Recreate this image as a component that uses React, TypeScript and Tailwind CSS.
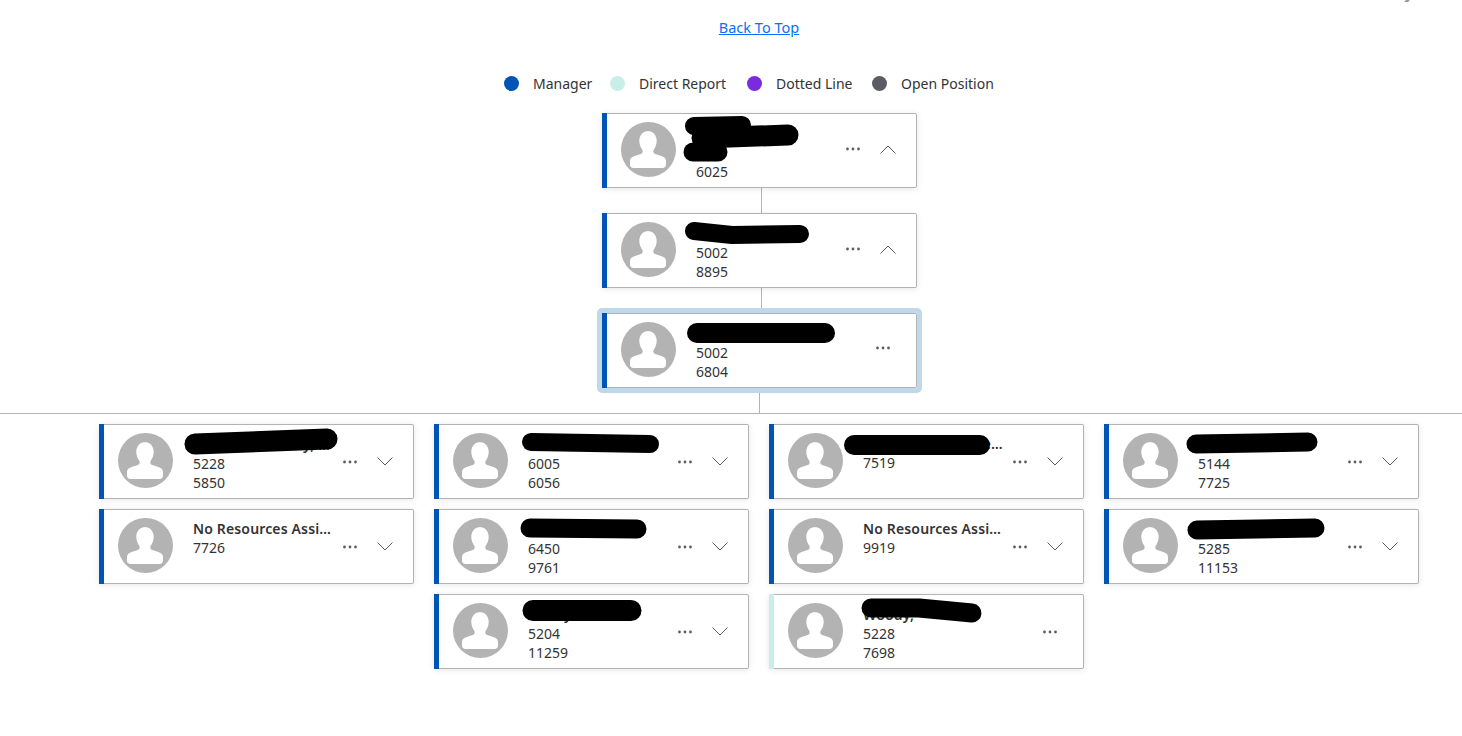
import { ReactNode } from "react";

const MANAGER = "bg-[#0054b4]";
const DIRECT = "bg-[#c9eeea]";

// person placeholder used on every card
function Avatar() {
  return (
    <svg width="55" height="55" viewBox="0 0 55 55" className="shrink-0">
      <circle cx="27.5" cy="27.5" r="27.5" fill="#b3b3b3" />
      <path
        d="M27.5 9c-5.400 0-9.200 4.200-9.200 9.800 0 3.700 1.300 6.500 2.800 8.700.9 1.300.9 3.400-.7 4.200-2.500 1.200-6.400 2-8.900 3.200-1.700.8-2.500 2.300-2.500 4.100v3.500c0 2 1.300 3.500 3.500 3.500h29c2.200 0 3.500-1.500 3.500-3.500v-3.500c0-1.800-.8-3.300-2.500-4.100-2.500-1.200-6.400-2-8.900-3.200-1.600-.8-1.600-2.900-.7-4.200 1.500-2.200 2.800-5 2.800-8.700 0-5.600-3.800-9.800-9.200-9.800z"
        fill="#fff"
      />
    </svg>
  );
}

function Dots() {
  return (
    <svg width="16" height="4" viewBox="0 0 16 4" className="shrink-0">
      <circle cx="2.500" cy="2" r="1.400" fill="#5c5c66" />
      <circle cx="8" cy="2" r="1.400" fill="#5c5c66" />
      <circle cx="13.500" cy="2" r="1.400" fill="#5c5c66" />
    </svg>
  );
}

function Chevron({ up }: { up?: boolean }) {
  return (
    <svg width="16" height="9" viewBox="0 0 16 9" className={`shrink-0 ${up ? "translate-y-px" : ""}`}>
      <path d={up ? "M.5 8.500 8 1l7.500 7.500" : "M.5.5 8 8 15.500.5"} fill="none" stroke="#5c5c66" strokeWidth="1" />
    </svg>
  );
}

interface CardProps {
  name?: string;
  second?: string;
  numbers: string[];
  accent?: string;
  chevron?: "up" | "down";
  selected?: boolean;
  upper?: boolean;
  blob?: ReactNode; // black marker stroke over the name
}

function Card({ name, second, numbers, accent = MANAGER, chevron, selected, upper, blob }: CardProps) {
  const single = numbers.length === 1 && !second;
  return (
    <div className="relative flex h-[75px] w-[315px] shrink-0 items-start rounded-[2px] border border-l-0 border-[#b3b3b3] bg-white shadow-[0_1px_6px_rgba(0,0,0,0.1)]">
      {selected && (
        <div className="pointer-events-none absolute -bottom-[6px] -left-[5px] -right-[6px] -top-[6px] rounded-[5px] border-[5px] border-[#c0d9ea]" />
      )}
      <div className={`h-[75px] -my-px w-[5px] shrink-0 ${accent}`} />
      <div className="ml-[14px] mt-2">
        <Avatar />
      </div>
      <div className={`ml-5 w-[140px] shrink-0 text-[14px] leading-[19px] text-[#333] ${single ? "pt-[9px]" : "pt-[10px]"}`}>
        {name && <div className="truncate font-semibold tracking-[0.15px]">{name}</div>}
        {second && <div className="truncate font-semibold">{second}</div>}
        {numbers.map((n) => (
          <div key={n}>{n}</div>
        ))}
      </div>
      {chevron ? (
        <div className={`ml-[9px] flex items-center gap-[19px] ${upper ? "mt-[30px]" : "mt-[32px]"}`}>
          <Dots />
          <Chevron up={chevron === "up"} />
        </div>
      ) : (
        <div className={`ml-[39px] flex items-center ${upper ? "mt-[32px]" : "mt-[35px]"}`}>
          <Dots />
        </div>
      )}
      {blob && (
        <svg width="315" height="75" viewBox="0 0 315 75" className="pointer-events-none absolute left-0 -top-px">
          <g fill="none" stroke="#000" strokeLinecap="round" strokeLinejoin="round">
            {blob}
          </g>
        </svg>
      )}
    </div>
  );
}

function VLine({ shifted }: { shifted?: boolean }) {
  return <div className={`h-[25px] w-px bg-[#b3b3b3] ${shifted ? "ml-[4px]" : ""}`} />;
}

function LegendItem({ color, label, width }: { color: string; label: string; width: string }) {
  return (
    <div className="mr-5 flex items-center gap-[14px]">
      <span className={`h-[15px] w-[15px] rounded-full ${color}`} />
      <span className={`whitespace-nowrap ${width}`}>{label}</span>
    </div>
  );
}

export default function App() {
  return (
    <div className="relative min-h-[736px] bg-white text-[14px] text-[#333] [font-family:'Noto_Sans',sans-serif]">
      <div className="absolute right-[53px] top-0 h-[2px] w-[4px] -skew-x-[40deg] bg-[#9a9a9a]" />

      <div className="flex flex-col items-center pl-[57px] pt-[17px]">
        <a href="#top" className="-ml-px text-[14.5px] leading-5 text-[#0d6efd] underline">
          Back To Top
        </a>
        <div className="mt-[36px] flex h-5 items-center">
          <LegendItem color={MANAGER} label="Manager" width="w-[57px]" />
          <LegendItem color={DIRECT} label="Direct Report" width="w-[88px]" />
          <LegendItem color="bg-[#7a2be0]" label="Dotted Line" width="w-[76px]" />
          <LegendItem color="bg-[#5c5c66]" label="Open Position" width="w-[94px]" />
        </div>

        <div className="mt-[20px] flex flex-col items-center">
          <Card
            name={"\u00a0"}
            second={"\u00a0"}
            numbers={["6025"]}
            chevron="up"
            upper
            blob={
              <>
                <path d="M92 13 L140 12" strokeWidth="18" />
                <path d="M100 25 L186 22" strokeWidth="21" />
                <path d="M91 39 L116 39" strokeWidth="19" />
              </>
            }
          />
          <VLine shifted />
          <Card
            name="Redacted Name"
            numbers={["5002", "8895"]}
            chevron="up"
            upper
            blob={<path d="M92 18 L130 22 L198 21" strokeWidth="18" />}
          />
          <VLine shifted />
          <Card
            name="Redacted Name"
            numbers={["5002", "6804"]}
            selected
            upper
            blob={<path d="M95 20 L223 20" strokeWidth="20" />}
          />
          <VLine />
        </div>
      </div>

      <div className="h-px w-full bg-[#b3b3b3]" />

      <div className="ml-[99px] mt-[10px] grid w-[1320px] grid-cols-4 items-start gap-5">
        <div className="flex flex-col gap-[10px]">
          <Card
            name="Redacted Namey, Jay"
            numbers={["5228", "5850"]}
            chevron="down"
            blob={<path d="M96 20 L228 15" strokeWidth="21" />}
          />
          <Card name="No Resources Assigned" numbers={["7726"]} chevron="down" />
        </div>
        <div className="flex flex-col gap-[10px]">
          <Card
            name="Redacted Name"
            numbers={["6005", "6056"]}
            chevron="down"
            blob={<path d="M97 18 L216 20" strokeWidth="18" />}
          />
          <Card
            name="Redacted Name"
            numbers={["6450", "9761"]}
            chevron="down"
            blob={<path d="M96 19 L203 20" strokeWidth="19" />}
          />
          <Card
            name="Marky"
            numbers={["5204", "11259"]}
            chevron="down"
            blob={<path d="M99 16.500 L197 16.500" strokeWidth="21" />}
          />
        </div>
        <div className="flex flex-col gap-[10px]">
          <Card
            name="Redacted Employee Name Here"
            numbers={["7519"]}
            chevron="down"
            blob={<path d="M85 21 L211 21" strokeWidth="20" />}
          />
          <Card name="No Resources Assigned" numbers={["9919"]} chevron="down" />
          <Card
            name="Woody,"
            numbers={["5228", "7698"]}
            accent={DIRECT}
            blob={<path d="M102 14 L150 14 L203 19" strokeWidth="19" />}
          />
        </div>
        <div className="flex flex-col gap-[10px]">
          <Card
            name="Redacted Name"
            numbers={["5144", "7725"]}
            chevron="down"
            blob={<path d="M92 20 L204 18" strokeWidth="19" />}
          />
          <Card
            name="Redacted Name"
            numbers={["5285", "11153"]}
            chevron="down"
            blob={<path d="M93 21 L211 19" strokeWidth="19" />}
          />
        </div>
      </div>
    </div>
  );
}
